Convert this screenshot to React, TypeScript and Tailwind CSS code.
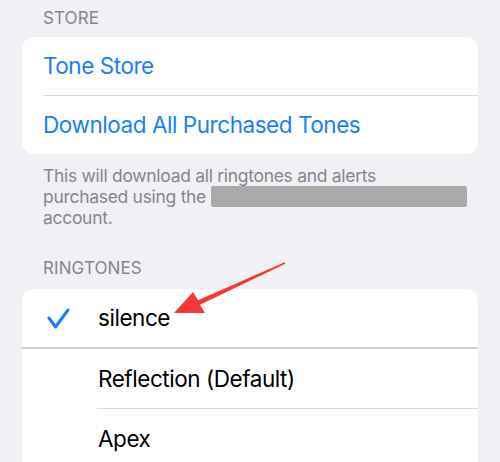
import React from 'react';

const font = { fontFamily: 'Inter, "Noto Sans", sans-serif' };

function SectionHeader({ title, className }: { title: string; className?: string }) {
  return (
    <div className={`pl-[21px] text-[17px] leading-[20px] tracking-[0.1px] text-[#86868b] ${className ?? ''}`}>
      {title}
    </div>
  );
}

function CheckIcon() {
  return (
    <svg width="24" height="22" viewBox="0 0 24 22" fill="none">
      <path
        d="M2 10 L8.5 19 L21 2"
        stroke="#1a7ff7"
        strokeWidth="3"
        strokeLinecap="round"
        strokeLinejoin="round"
      />
    </svg>
  );
}

// red markup arrow pointing at the selected tone
function MarkupArrow() {
  return (
    <svg
      className="pointer-events-none absolute left-0 top-0"
      width="500"
      height="462"
      viewBox="0 0 500 462"
    >
      <polygon
        points="174,313 193,292 198,300.2 284.7,262.3 285.3,263.7 200,304.8 205,313"
        fill="#f73636"
      />
    </svg>
  );
}

const rowText = 'text-[22.5px] tracking-[-0.45px]';

export default function App() {
  return (
    <div className="relative h-[462px] w-[500px] overflow-hidden bg-[#f0f0f5]" style={font}>
      <div className="px-[22px]">
        <SectionHeader title="STORE" className="pt-[8px] mb-[9px]" />

        <div className="rounded-[12px] bg-white">
          <div className={`flex h-[58px] items-center px-[21px] text-[#1a7ff7] ${rowText}`}>Tone Store</div>
          <div className="ml-[21px] h-px bg-[#dcdce0]" />
          <div className={`flex h-[58px] items-center px-[21px] text-[#1a7ff7] ${rowText}`}>
            Download All Purchased Tones
          </div>
        </div>

        <p className="pl-[21px] pt-[11px] text-[17.5px] leading-[21px] tracking-[-0.3px] text-[#86868b]">
          This will download all ringtones and alerts
          <br />
          purchased using the{' '}
          <span className="inline-block h-[21px] w-[256px] rounded-[2px] bg-[#aaaaaa] align-[-4px]" />
          <br />
          account.
        </p>

        <SectionHeader title="RINGTONES" className="mt-[30px] mb-[11px]" />

        <div className="rounded-t-[12px] bg-white">
          <div className="flex h-[58px] items-center">
            <div className="flex w-[76px] justify-start pl-[25px] pt-[2px]">
              <CheckIcon />
            </div>
            <span className={`text-black ${rowText}`}>silence</span>
          </div>
          <div className="h-[2px] bg-[#cfcfd3]" />
          <div className={`flex h-[59px] items-center pl-[76px] text-black ${rowText}`}>Reflection (Default)</div>
          <div className="ml-[75px] h-px bg-[#dcdce0]" />
          <div className={`flex h-[59px] items-center pl-[76px] text-black ${rowText}`}>Apex</div>
        </div>
      </div>

      <MarkupArrow />
    </div>
  );
}
